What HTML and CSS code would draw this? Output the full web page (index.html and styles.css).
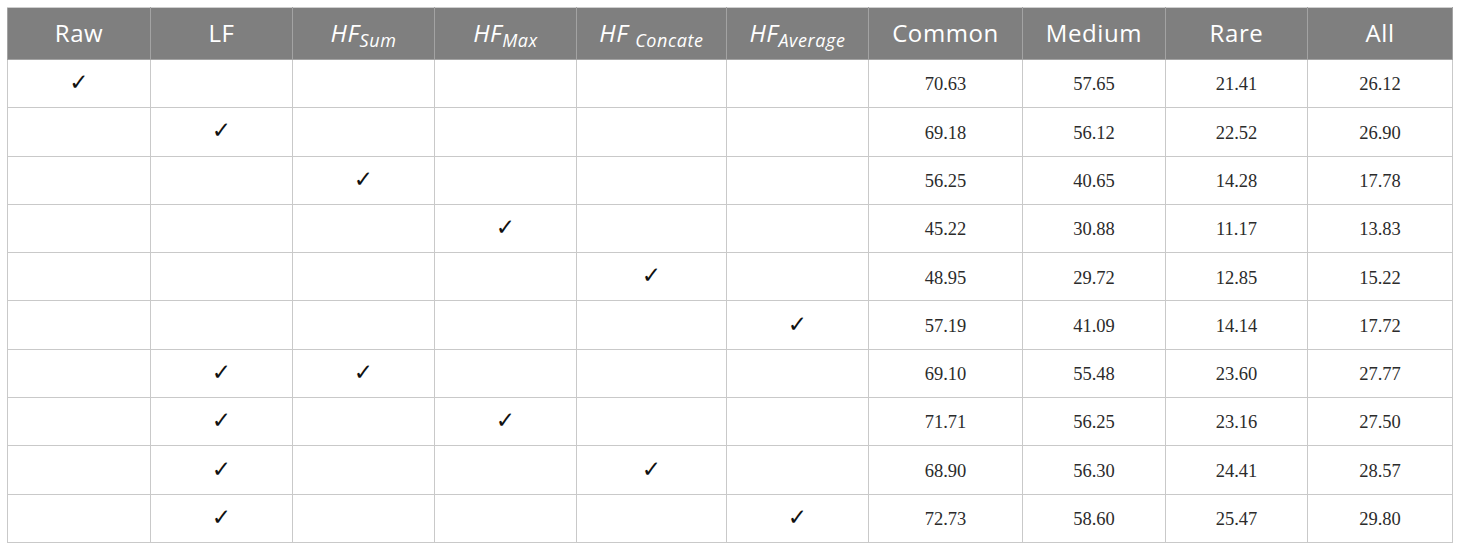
FILE: index.html
```html
<!DOCTYPE html>
<html>
<head>
<meta charset="utf-8">
<link rel="stylesheet" href="styles.css">
</head>
<body>
<table class="results">
  <colgroup>
    <col class="c143"><col class="c142"><col class="c142"><col class="c142"><col class="c150"><col class="c142"><col class="c154"><col class="c143"><col class="c142"><col class="c145">
  </colgroup>
  <thead>
    <tr>
      <th>Raw</th>
      <th>LF</th>
      <th><i>HF<sub>Sum</sub></i></th>
      <th><i>HF<sub>Max</sub></i></th>
      <th><i>HF <sub>Concate</sub></i></th>
      <th><i>HF<sub>Average</sub></i></th>
      <th>Common</th>
      <th>Medium</th>
      <th>Rare</th>
      <th>All</th>
    </tr>
  </thead>
  <tbody>
    <tr><td class="ck">✓</td><td></td><td></td><td></td><td></td><td></td><td>70.63</td><td>57.65</td><td>21.41</td><td>26.12</td></tr>
    <tr><td></td><td class="ck">✓</td><td></td><td></td><td></td><td></td><td>69.18</td><td>56.12</td><td>22.52</td><td>26.90</td></tr>
    <tr><td></td><td></td><td class="ck">✓</td><td></td><td></td><td></td><td>56.25</td><td>40.65</td><td>14.28</td><td>17.78</td></tr>
    <tr><td></td><td></td><td></td><td class="ck">✓</td><td></td><td></td><td>45.22</td><td>30.88</td><td>11.17</td><td>13.83</td></tr>
    <tr><td></td><td></td><td></td><td></td><td class="ck">✓</td><td></td><td>48.95</td><td>29.72</td><td>12.85</td><td>15.22</td></tr>
    <tr><td></td><td></td><td></td><td></td><td></td><td class="ck">✓</td><td>57.19</td><td>41.09</td><td>14.14</td><td>17.72</td></tr>
    <tr><td></td><td class="ck">✓</td><td class="ck">✓</td><td></td><td></td><td></td><td>69.10</td><td>55.48</td><td>23.60</td><td>27.77</td></tr>
    <tr><td></td><td class="ck">✓</td><td></td><td class="ck">✓</td><td></td><td></td><td>71.71</td><td>56.25</td><td>23.16</td><td>27.50</td></tr>
    <tr><td></td><td class="ck">✓</td><td></td><td></td><td class="ck">✓</td><td></td><td>68.90</td><td>56.30</td><td>24.41</td><td>28.57</td></tr>
    <tr><td></td><td class="ck">✓</td><td></td><td></td><td></td><td class="ck">✓</td><td>72.73</td><td>58.60</td><td>25.47</td><td>29.80</td></tr>
  </tbody>
</table>
</body>
</html>
```
FILE: styles.css
```css
html, body {
  margin: 0;
  padding: 0;
  background: #ffffff;
}
body {
  padding: 7px 0 0 7px;
}
.results {
  border-collapse: collapse;
  table-layout: fixed;
  width: 1446px;
}
.c143 { width: 143px; }
.c142 { width: 142px; }
.c150 { width: 150px; }
.c154 { width: 154px; }
.c145 { width: 145px; }
.results th {
  background: #7f7f7f;
  color: #ffffff;
  font-family: "Open Sans", "Liberation Sans", sans-serif;
  font-weight: normal;
  font-size: 24px;
  letter-spacing: 0.6px;
  height: 49px;
  padding: 0 0 2px;
  text-align: center;
  vertical-align: middle;
  border: 1px solid #a3a3a3;
  border-top-color: #cfcfcf;
  line-height: 1;
}
.results th sub {
  font-size: 18px;
  letter-spacing: 0.6px;
  vertical-align: -5px;
  line-height: 0;
}
.results td {
  font-family: "Liberation Serif", "Times New Roman", serif;
  font-size: 18.5px;
  line-height: 1;
  color: #2b2b2b;
  text-align: center;
  vertical-align: middle;
  height: 45.3px;
  padding: 2px 0 0;
  border: 1px solid #c9c9c9;
}
.results td.ck {
  font-family: "DejaVu Sans", sans-serif;
  font-size: 23px;
  font-weight: bold;
  color: #111111;
  padding: 0 0 2px;
}
```
